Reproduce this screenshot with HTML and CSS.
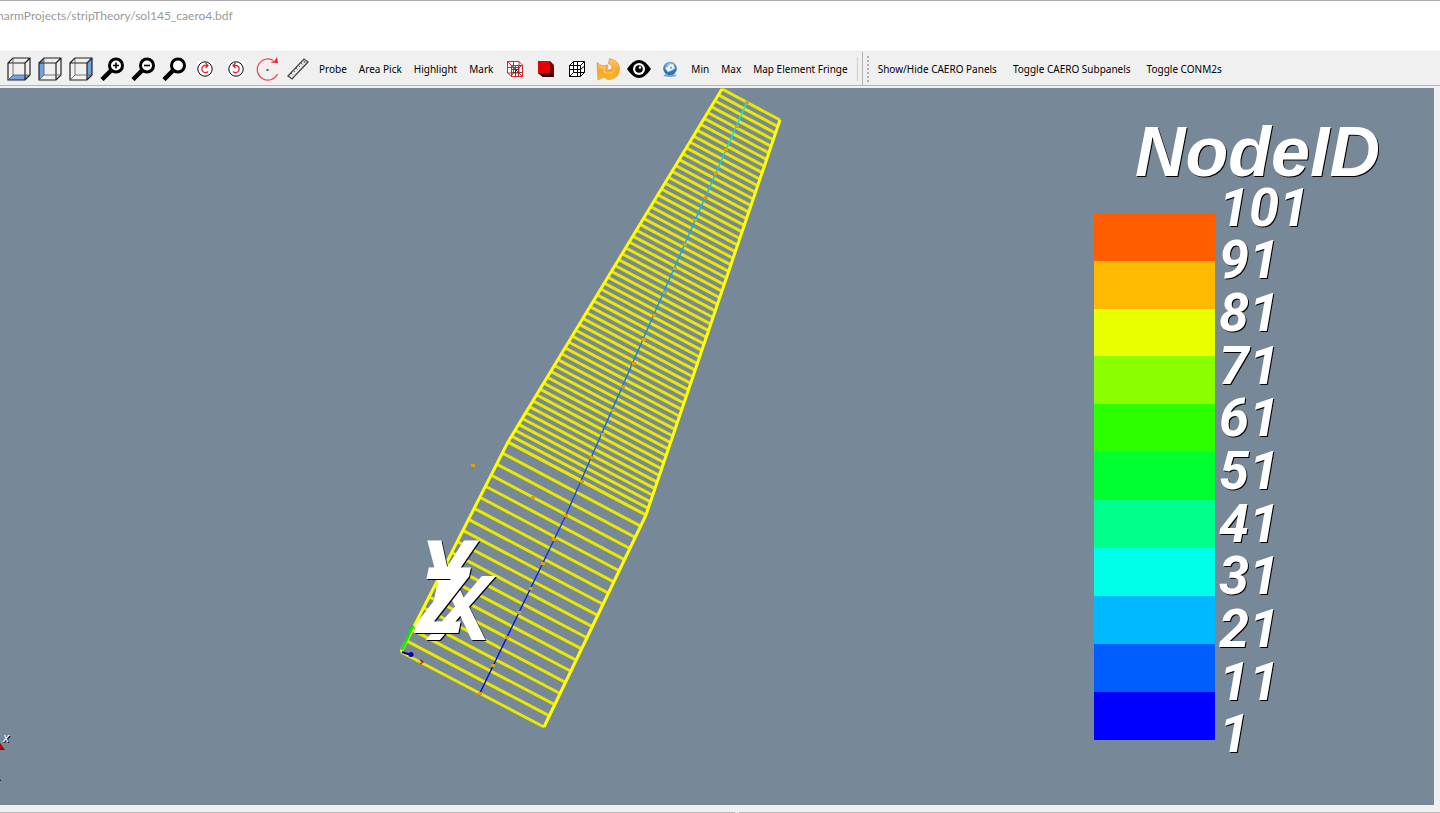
FILE: index.html
```html
<!DOCTYPE html>
<html lang="en">
<head>
<meta charset="utf-8">
<title>sol145_caero4.bdf</title>
<link rel="stylesheet" href="styles.css">
</head>
<body>
<header class="titlebar"><span class="path">harmProjects/stripTheory/sol145_caero4.bdf</span></header>
<nav class="toolbar" aria-label="Tools">
  <div class="group">
    <button class="tool" aria-label="Bottom view"><svg class="icon" viewBox="0 0 24 24"><path d="M1 23L6 18H23L18 23Z" fill="#6fa3e0"/><g class="cube"><path d="M1 6L6 1H23V18L18 23H1ZM1 6H18V23M18 6L23 1"/><path class="thin" d="M6 1V18H23M6 18L1 23"/></g></svg></button>
    <button class="tool" aria-label="Left view"><svg class="icon" viewBox="0 0 24 24"><path d="M1 6L6 1V18L1 23Z" fill="#6fa3e0"/><g class="cube"><path d="M1 6L6 1H23V18L18 23H1ZM1 6H18V23M18 6L23 1"/><path class="thin" d="M6 1V18H23M6 18L1 23"/></g></svg></button>
    <button class="tool" aria-label="Right view"><svg class="icon" viewBox="0 0 24 24"><path d="M18 6L23 1V18L18 23Z" fill="#6fa3e0"/><g class="cube"><path d="M1 6L6 1H23V18L18 23H1ZM1 6H18V23M18 6L23 1"/><path class="thin" d="M6 1V18H23M6 18L1 23"/></g></svg></button>
    <button class="tool" aria-label="Zoom in"><svg class="icon" viewBox="0 0 24 24"><path class="handle" d="M2 22.500L11 13.500"/><circle class="lens" cx="16" cy="8.500" r="6.500"/><path class="sign" d="M13 8.500H19M16 5.500V11.500"/></svg></button>
    <button class="tool" aria-label="Zoom out"><svg class="icon" viewBox="0 0 24 24"><path class="handle" d="M2 22.500L11 13.500"/><circle class="lens" cx="16" cy="8.500" r="6.500"/><path class="sign" d="M13 8.500H19"/></svg></button>
    <button class="tool" aria-label="Zoom"><svg class="icon" viewBox="0 0 24 24"><path class="handle" d="M2 22.500L11 13.500"/><circle class="lens" cx="16" cy="8.500" r="6.500"/></svg></button>
    <button class="tool" aria-label="Rotate clockwise"><svg class="icon small" viewBox="0 0 16 16"><path d="M0 0H16V16H0Z" fill="#fff"/><circle class="ring" cx="8" cy="8" r="7.200"/><path class="spin" d="M10 4.500H7.500A3.600 3.600 0 1 0 11 10.500M8.500 2L11 4.500L8.500 7"/></svg></button>
    <button class="tool" aria-label="Rotate counterclockwise"><svg class="icon small" viewBox="0 0 16 16"><path d="M0 0H16V16H0Z" fill="#fff"/><circle class="ring" cx="8" cy="8" r="7.200"/><path class="spin" d="M6 4.500H8.500A3.600 3.600 0 1 1 5 10.500M7.500 2L5 4.500L7.500 7"/></svg></button>
    <button class="tool" aria-label="Center of rotation"><svg class="icon" viewBox="0 0 24 24"><path d="M18.500 3.500A10.600 10.600 0 1 0 22.500 17" fill="none" stroke="#f0454d" stroke-width="1.200"/><path d="M22 0L23 6L15 5.500L19.500 4Z" fill="#e8202a"/><path d="M11.500 12H13.500V14H11.500Z" fill="#555"/></svg></button>
    <button class="tool" aria-label="Measure"><svg class="icon" viewBox="0 0 24 24"><path d="M2 19L18 2L22 5L6 22Z" fill="#e8e8e8" stroke="#444" stroke-width="1.300"/><path d="M5 16L6.500 17.500M7.500 13.500L9 15M10 11L11.500 12.500M12.500 8.500L14 10M15 6L16.500 7.500" stroke="#666"/><circle cx="18.500" cy="5" r="1" fill="#777"/></svg></button>
    <button class="tool text">Probe</button>
    <button class="tool text">Area Pick</button>
    <button class="tool text">Highlight</button>
    <button class="tool text">Mark</button>
    <button class="tool" aria-label="Wireframe"><svg class="icon small" viewBox="0 0 16 16"><path d="M0 0H16V16H0Z" fill="#fff"/><path d="M4.500 4V15.500M4.500 8.500H12M8.500 4V15M11.500 4.500V15.500M4 11.500H15M4 4.500L11 11M4 15L14 5" fill="none" stroke="#222" stroke-width=".8"/><path d="M.5.500H12L15.500 4V15.500H4.500L.5 12ZM.5.500L4.500 4.500H15.500M4.500 4.500V15.500M12 .5V12H.5M12 12L15.500 15.500M6.500 .5V12M.5 6.500H12" fill="none" stroke="#e81c24"/></svg></button>
    <button class="tool" aria-label="Surface"><svg class="icon small" viewBox="0 0 16 16"><path d="M12 0L16 4V16H5L0 12Z" fill="#7c0000"/><path d="M0 12H12L16 16H5Z" fill="#300"/><path d="M0 0H12V12H0Z" fill="#e60000"/></svg></button>
    <button class="tool" aria-label="Edges"><svg class="icon small" viewBox="0 0 16 16"><path d="M0 0H16V16H0Z" fill="#fff"/><path d="M4.500.5H15.500V11.500L11.500 15.500H.5V4.500ZM.5 4.500H11.500V15.500M11.500 4.500L15.500.5M4.500.5V11.500H15.500M4.500 11.500L.5 15.500M.5 8.500H11.500L15.500 5M8.500 1V15" fill="none" stroke="#000"/></svg></button>
    <button class="tool" aria-label="Reload"><svg class="icon" viewBox="0 0 24 24"><defs><linearGradient id="gold" x2="0" y2="1"><stop stop-color="#ffc766"/><stop offset=".55" stop-color="#fba62b"/><stop offset="1" stop-color="#f6bb16"/></linearGradient></defs><path d="M1 5.500L6 9L12 8L11 12.500Q14 14 16 11.500Q17 8.500 12.500 6.500L13.500 1.500Q22.500 3 23.500 11.500Q23.500 21 14 22.500Q10 22.500 8 20L2 23Z" fill="url(#gold)" stroke="#dc9440" stroke-width=".7"/><path d="M3 8L6 11L9 10.500L8 15Q15 18 19 13" fill="none" stroke="#ffd890" stroke-width=".8"/></svg></button>
    <button class="tool" aria-label="Show"><svg class="icon" viewBox="0 0 24 24"><path d="M0 12Q12-6 24 12Q12 30 0 12Z"/><circle cx="12" cy="12" r="6" fill="#fff"/><circle cx="12" cy="12" r="3.800"/><circle cx="13" cy="10.500" r="1.300" fill="#fff"/></svg></button>
    <button class="tool" aria-label="Screenshot"><svg class="icon small" viewBox="0 0 16 16"><defs><radialGradient id="globe" cy=".3"><stop stop-color="#c4e2f8"/><stop offset="1" stop-color="#2f74b4"/></radialGradient></defs><ellipse cx="8" cy="14.500" rx="6.500" ry="1.500" fill="#6fa6d0"/><circle cx="8" cy="7.500" r="6.800" fill="url(#globe)"/><path d="M3 7L7 5L8 3.500L11 3L13 7.500L6 11Z" fill="#e8f4fc"/><circle cx="9" cy="6.800" r="1" fill="#5d9ccb"/></svg></button>
    <button class="tool text">Min</button>
    <button class="tool text">Max</button>
    <button class="tool text">Map Element Fringe</button>
    <span class="separator"></span>
  </div>
  <div class="group docked">
    <span class="grip"></span>
    <button class="tool text">Show/Hide CAERO Panels</button>
    <button class="tool text">Toggle CAERO Subpanels</button>
    <button class="tool text">Toggle CONM2s</button>
  </div>
</nav>
<main class="viewport">
  <svg class="scene" viewBox="0 88 1434 717" preserveAspectRatio="xMidYMid slice" role="img" aria-label="Wing panel model">
    <defs>
      <linearGradient id="spar" gradientUnits="userSpaceOnUse" x1="480" y1="693" x2="747" y2="102">
        <stop stop-color="#0000d8"/><stop offset=".22" stop-color="#0828ee"/><stop offset=".35" stop-color="#1050ee"/><stop offset=".6" stop-color="#1488e8"/><stop offset=".8" stop-color="#00b4ff"/><stop offset="1" stop-color="#10eef0"/>
      </linearGradient>
    </defs>
    <g id="ribs" class="ribs"></g>
    <path class="outline" d="M544 727L646 515L780 120M722 89L508 442L401 652"/>
    <path d="M480 693L566 515L747 102" fill="none" stroke="url(#spar)" stroke-width="1.400"/>
    <g id="nodes" class="nodes"></g>
    <path d="M402 650L413 626" stroke="#00f000" stroke-width="2.500"/><path d="M409 629L412 625L415 629" fill="none" stroke="#20c010"/>
    <path d="M402 652L411 655" stroke="#0000b4" stroke-width="2"/><circle cx="411" cy="654.500" r="2.500" fill="#00009c"/>
    <path d="M420 660L423 662L420 664" fill="none" stroke="#a01800" stroke-width="1.200"/>
    <g class="axis">
      <text class="slim" x="419" y="606">Y</text><text x="430" y="640">X</text><text class="slim" x="417" y="633">Z</text>
    </g>
    <path d="M0 743L5 750H0Z" fill="#a80000"/><path d="M0 779L1 781H0Z"/>
    <text class="mini" x="3" y="742">x</text>
  </svg>
  <section class="legend" aria-label="NodeID legend">
    <h1 class="legend-title">NodeID</h1>
    <div class="legend-body">
      <div class="bar">
        <i class="c1"></i><i class="c2"></i><i class="c3"></i><i class="c4"></i><i class="c5"></i><i class="c6"></i><i class="c7"></i><i class="c8"></i><i class="c9"></i><i class="c10"></i><i class="c11"></i>
      </div>
      <ol class="labels">
        <li>101</li><li>91</li><li>81</li><li>71</li><li>61</li><li>51</li><li>41</li><li>31</li><li>21</li><li>11</li><li>1</li>
      </ol>
    </div>
  </section>
</main>
<footer class="dock"><span class="dock-left"></span><span class="dock-right"></span></footer>
<script src="scene.js"></script>
</body>
</html>
```
FILE: styles.css
```css
* { box-sizing: border-box; }
body {
  margin: 0;
  min-height: 100vh;
  display: flex;
  flex-direction: column;
  overflow: hidden;
  background: #f0f0f0;
  color: #000;
  font-family: "Noto Sans", "Open Sans", sans-serif;
  font-size: 10px;
}
.titlebar {
  height: 51px;
  padding-top: 7px;
  border-top: 1px solid #aaa;
  background: #fff;
  overflow: hidden;
}
.path {
  display: block;
  margin-left: -3px;
  color: #999;
  font: 12px/16px Lato, sans-serif;
  white-space: nowrap;
}
.toolbar {
  display: flex;
  height: 35px;
  border-top: 1px solid #e8e8e8;
  border-bottom: 1px solid #b4b4b4;
}
.group {
  display: flex;
  align-items: center;
  padding-left: 3px;
  border-right: 1px solid #b4b4b4;
}
.docked { border-right: 0; padding-left: 4px; }
.tool {
  display: flex;
  align-items: center;
  justify-content: center;
  flex: none;
  width: 31px;
  height: 32px;
  margin: 0;
  padding: 0;
  border: 0;
  background: none;
  color: #000;
  font: inherit;
  white-space: nowrap;
}
.text { width: auto; padding: 0 6px; }
.docked .text { padding: 0 8px; }
.icon { width: 24px; height: 24px; }
.small { width: 16px; height: 16px; }
.cube { fill: none; stroke: #222; stroke-width: 1.2; }
.thin { stroke: #555; stroke-width: .8; }
.handle { stroke: #000; stroke-width: 4.5; }
.lens { fill: #fff; stroke: #000; stroke-width: 3; }
.sign { stroke: #000; stroke-width: 1.6; }
.ring { fill: none; stroke: #000; }
.spin { fill: none; stroke: #e8202a; stroke-width: 1.3; }
.separator { width: 1px; height: 24px; margin: 0 4px 0 3px; background: #ccc; }
.grip { width: 2px; height: 26px; margin-right: 1px; background: repeating-linear-gradient(#b0b0b0 0 2px, transparent 2px 4px); }
.viewport {
  position: relative;
  flex: 1;
  margin: 2px 6px 0 0;
  background: #778899;
  overflow: hidden;
}
.scene { position: absolute; inset: 0; width: 100%; height: 100%; }
.ribs { stroke: #e8e800; stroke-width: 3; }
.nodes { fill: #daa10c; shape-rendering: crispEdges; }
.outline { fill: none; stroke: #ff0; stroke-width: 3; stroke-linejoin: round; }
.axis {
  fill: #fff;
  font: italic bold 92px "Liberation Sans", Arial, sans-serif;
  text-shadow: 1px 1px 0 #000;
}
.slim { font-family: "Open Sans", sans-serif; }
.mini { fill: #fff; font: italic 13px "Noto Sans", sans-serif; text-shadow: 1px 1px 0 #000; }
.legend {
  position: absolute;
  top: 4%;
  right: 54px;
  bottom: 6%;
  width: 286px;
  display: flex;
  flex-direction: column;
  color: #fff;
  font: italic bold 54px/52px "Liberation Sans", Arial, sans-serif;
  text-shadow: 1px 1px 0 #000;
}
.legend-title { margin: 0; padding-left: 41px; font-size: 70px; line-height: 70px; }
.legend-body { flex: 1; display: flex; gap: 4px; }
.bar {
  width: 121px;
  display: flex;
  flex-direction: column;
  margin: 26px 0 22px;
}
.bar i { flex: 1; }
.labels {
  flex: 1;
  display: flex;
  flex-direction: column;
  margin: -5px 0 1px;
  padding: 0;
  list-style: none;
  font-family: Roboto, sans-serif;
  font-kerning: none;
}
.labels li { flex: 1; }
.c1 { background: #ff5d00; }
.c2 { background: #ffb900; }
.c3 { background: #e8ff00; }
.c4 { background: #8bff00; }
.c5 { background: #2eff00; }
.c6 { background: #00ff2e; }
.c7 { background: #00ff8b; }
.c8 { background: #00ffe8; }
.c9 { background: #00b9ff; }
.c10 { background: #005dff; }
.c11 { background: #00f; }
.dock { display: flex; gap: 4px; height: 8px; padding-top: 7px; }
.dock span { border-top: 1px solid #b4b4b4; }
.dock-left { flex: 735; }
.dock-right { flex: 701; }
```
FILE: scene.js
```js
const NS = "http://www.w3.org/2000/svg";

function add(parent, tag, attrs) {
  const el = document.createElementNS(NS, tag);
  for (const key in attrs) el.setAttribute(key, attrs[key]);
  parent.appendChild(el);
}

function mix(a, b, t) {
  return [a[0] + (b[0] - a[0]) * t, a[1] + (b[1] - a[1]) * t];
}

// Spanwise strips of one panel, from its root chord to its tip chord.
function drawPanel(root, tip, count) {
  const ribs = document.getElementById("ribs");
  for (let i = 0; i <= count; i++) {
    const a = mix(root[0], tip[0], i / count);
    const b = mix(root[1], tip[1], i / count);
    add(ribs, "line", { x1: a[0], y1: a[1], x2: b[0], y2: b[1] });
  }
}

drawPanel([[401, 652], [544, 727]], [[508, 442], [646, 515]], 19);
drawPanel([[508, 442], [646, 515]], [[722, 89], [780, 120]], 60);

const nodes = [[473, 465], [533, 497], [480, 693], [493, 665], [507, 637],
  [519, 612], [531, 588], [543, 563], [554, 539], [566, 515]];
for (let i = 0; i <= 16; i++) nodes.push(mix([582, 481], [747, 102], i / 16));
for (const [x, y] of nodes) {
  add(document.getElementById("nodes"), "rect", { x: Math.round(x) - 2, y: Math.round(y) - 1, width: 4, height: 3 });
}
```
